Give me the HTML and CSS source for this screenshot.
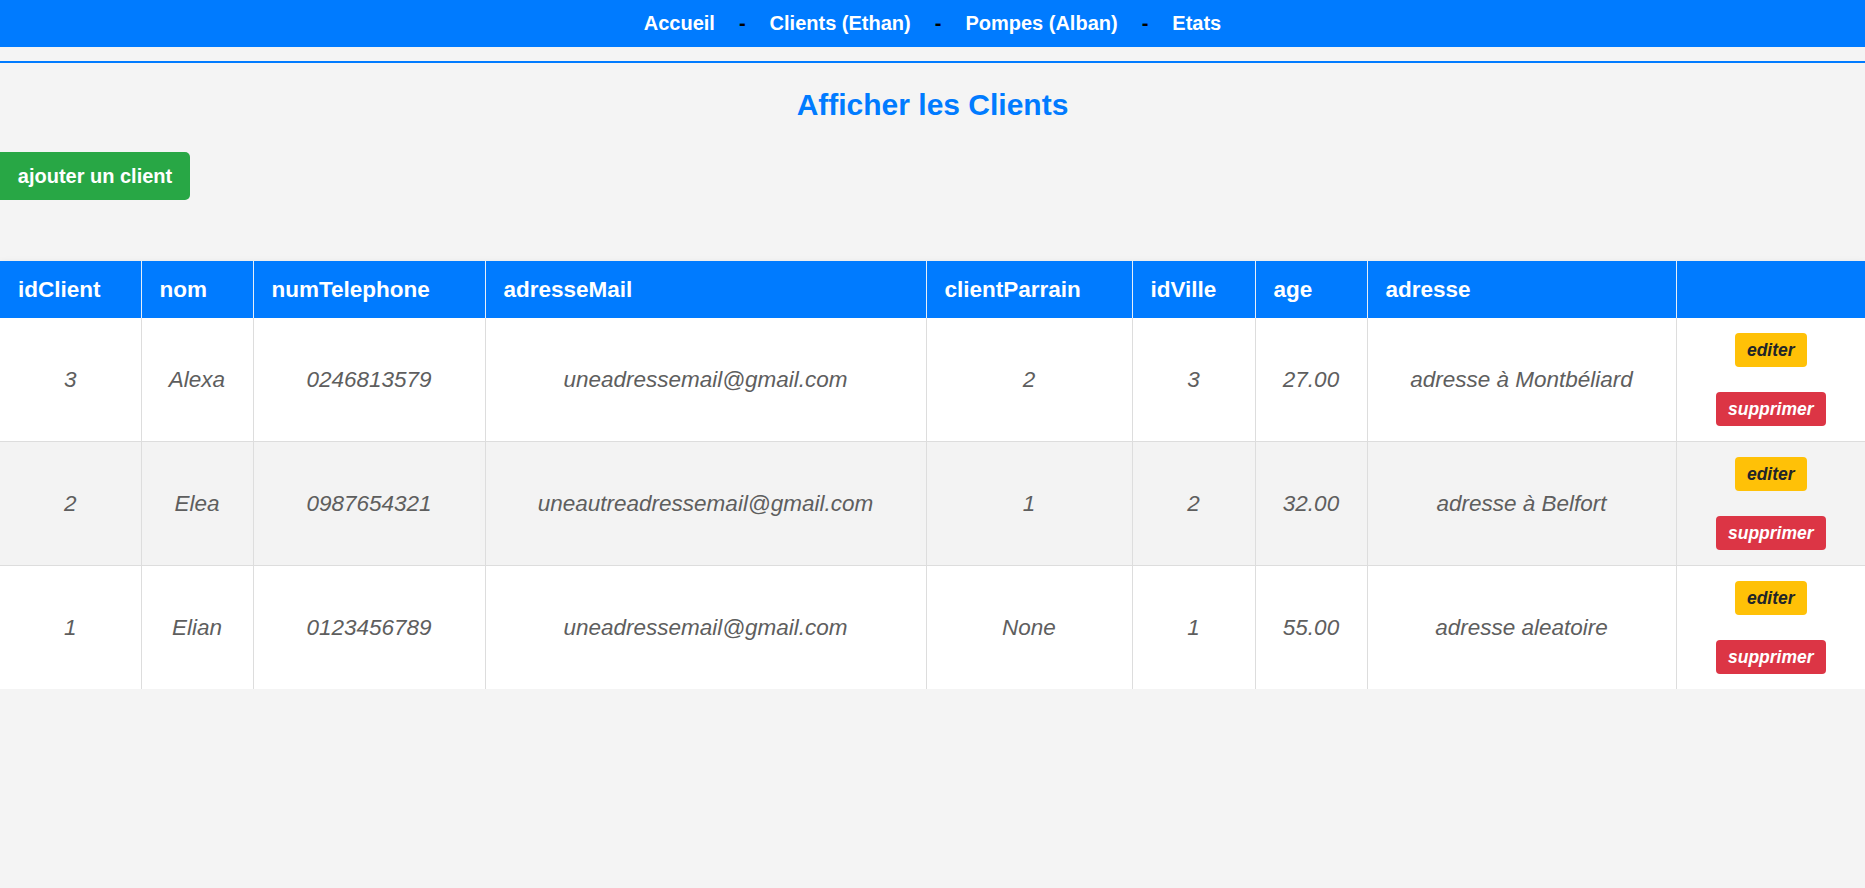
FILE: index.html
```html
<!DOCTYPE html>
<html lang="fr">
<head>
<meta charset="utf-8">
<title>Afficher les Clients</title>
<link rel="stylesheet" href="styles.css">
</head>
<body>
<nav class="topnav">
  <a class="nav-link" href="#">Accueil</a>
  <span class="nav-sep">-</span>
  <a class="nav-link" href="#">Clients (Ethan)</a>
  <span class="nav-sep">-</span>
  <a class="nav-link" href="#">Pompes (Alban)</a>
  <span class="nav-sep">-</span>
  <a class="nav-link" href="#">Etats</a>
</nav>
<hr class="rule">
<h1 class="title">Afficher les Clients</h1>
<a class="btn-add" href="#">ajouter un client</a>
<table class="clients">
  <colgroup>
    <col class="c-id"><col class="c-nom"><col class="c-tel"><col class="c-mail"><col class="c-parrain"><col class="c-ville"><col class="c-age"><col class="c-adr"><col class="c-act">
  </colgroup>
  <thead>
    <tr>
      <th>idClient</th><th>nom</th><th>numTelephone</th><th>adresseMail</th><th>clientParrain</th><th>idVille</th><th>age</th><th>adresse</th><th></th>
    </tr>
  </thead>
  <tbody>
    <tr>
      <td>3</td><td>Alexa</td><td>0246813579</td><td>uneadressemail@gmail.com</td><td>2</td><td>3</td><td>27.00</td><td>adresse à Montbéliard</td>
      <td class="actions"><div class="act-stack"><a class="btn-edit" href="#">editer</a><a class="btn-del" href="#">supprimer</a></div></td>
    </tr>
    <tr class="alt">
      <td>2</td><td>Elea</td><td>0987654321</td><td>uneautreadressemail@gmail.com</td><td>1</td><td>2</td><td>32.00</td><td>adresse à Belfort</td>
      <td class="actions"><div class="act-stack"><a class="btn-edit" href="#">editer</a><a class="btn-del" href="#">supprimer</a></div></td>
    </tr>
    <tr>
      <td>1</td><td>Elian</td><td>0123456789</td><td>uneadressemail@gmail.com</td><td>None</td><td>1</td><td>55.00</td><td>adresse aleatoire</td>
      <td class="actions"><div class="act-stack"><a class="btn-edit" href="#">editer</a><a class="btn-del" href="#">supprimer</a></div></td>
    </tr>
  </tbody>
</table>
</body>
</html>
```
FILE: styles.css
```css
html, body {
  margin: 0;
  padding: 0;
}
body {
  background: #f4f4f4;
  font-family: "Liberation Sans", Arial, sans-serif;
  color: #333;
}
.topnav {
  height: 47px;
  background: #007bff;
  display: flex;
  justify-content: center;
  align-items: center;
  gap: 24px;
  font-size: 20px;
  font-weight: bold;
}
.nav-link {
  color: #fff;
  text-decoration: none;
}
.nav-sep {
  color: #000;
}
.rule {
  margin: 14px 0 0;
  border: 0;
  height: 2px;
  background: #007bff;
}
.title {
  margin: 24px 0 0;
  text-align: center;
  color: #007bff;
  font-size: 30px;
  line-height: 36px;
  font-weight: bold;
}
.btn-add {
  display: inline-block;
  margin-top: 29px;
  width: 190px;
  height: 48px;
  box-sizing: border-box;
  line-height: 48px;
  text-align: center;
  background: #28a745;
  color: #fff;
  font-size: 20px;
  font-weight: bold;
  text-decoration: none;
  border-radius: 0 5px 5px 0;
  vertical-align: top;
}
.clients {
  margin-top: 61px;
  width: 100%;
  border-collapse: collapse;
  table-layout: fixed;
  background: #fff;
  box-shadow: 0 3px 8px rgba(0, 0, 0, 0.12);
}
.c-id { width: 141px; }
.c-nom { width: 112px; }
.c-tel { width: 232px; }
.c-mail { width: 441px; }
.c-parrain { width: 206px; }
.c-ville { width: 123px; }
.c-age { width: 112px; }
.c-adr { width: 309px; }
.c-act { width: 189px; }
.clients th {
  background: #007bff;
  color: #fff;
  font-size: 22.5px;
  font-weight: bold;
  text-align: left;
  height: 57px;
  padding: 0 0 0 18px;
  border: 1px solid #e6eef8;
  border-top: 0;
  border-bottom: 0;
}
.clients th:first-child,
.clients td:first-child {
  border-left: 0;
}
.clients th:last-child,
.clients td:last-child {
  border-right: 0;
}
.clients td {
  font-size: 22.5px;
  font-style: italic;
  color: #5e5e5e;
  text-align: center;
  vertical-align: middle;
  border: 1px solid #dddddd;
  border-top: 0;
  padding: 0 6px;
  height: 123px;
}
.clients tbody tr:last-child td {
  border-bottom: 0;
}
.clients tr.alt td {
  background: #f3f3f3;
}
.clients td.actions {
  padding: 0;
}
.act-stack {
  display: flex;
  flex-direction: column;
  align-items: center;
  gap: 25px;
}
.btn-edit,
.btn-del {
  display: block;
  height: 34px;
  line-height: 34px;
  padding: 0 12px;
  font-size: 17.5px;
  font-weight: bold;
  font-style: italic;
  text-decoration: none;
  border-radius: 4px;
}
.btn-edit {
  background: #ffc107;
  color: #212529;
}
.btn-del {
  background: #dc3545;
  color: #fff;
}
```
